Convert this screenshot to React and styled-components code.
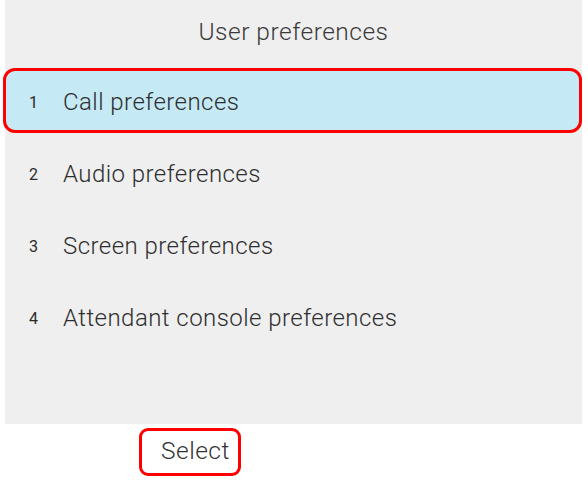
import React from "react";
import styled, { createGlobalStyle } from "styled-components";

const Global = createGlobalStyle`
  body {
    margin: 0;
    background: #ffffff;
    font-family: Roboto, "Liberation Sans", Arial, sans-serif;
  }
`;

const Screen = styled.div`
  width: 588px;
  height: 481px;
  display: flex;
  flex-direction: column;
`;

const Panel = styled.div`
  margin-left: 5px;
  width: 577px;
  height: 424px;
  background: #efefef;
  display: flex;
  flex-direction: column;
`;

const Title = styled.div`
  height: 64px;
  display: flex;
  align-items: center;
  justify-content: center;
  padding-bottom: 1px;
  box-sizing: border-box;
  font-size: 24.5px;
  letter-spacing: 0.5px;
  font-weight: 300;
  color: #3a3a3a;
`;

const Row = styled.div`
  height: 72px;
  display: flex;
  align-items: center;
  margin: 0 0 0 -2px;
`;

const Item = styled.div`
  flex: 1;
  height: 65px;
  box-sizing: border-box;
  display: flex;
  align-items: center;
  padding: 4px 0 0 23px;
  border: 3px solid ${(p) => (p.selected ? "#ff0000" : "transparent")};
  border-radius: 12px;
  background: ${(p) => (p.selected ? "#c5e9f5" : "transparent")};
`;

const Num = styled.span`
  width: 34px;
  font-size: 16px;
  font-weight: 400;
  color: #2a2a2a;
`;

const Label = styled.span`
  font-size: 24px;
  letter-spacing: 0.45px;
  font-weight: 300;
  color: #2e2e2e;
`;

const SoftKeys = styled.div`
  display: flex;
  padding: 4px 0 0 139px;
`;

const SoftKey = styled.div`
  width: 102px;
  height: 48px;
  box-sizing: border-box;
  border: 3px solid #ff0000;
  border-radius: 9px;
  display: flex;
  align-items: center;
  padding-left: 19px;
  padding-bottom: 3px;
  font-size: 24.5px;
  letter-spacing: 0.5px;
  font-weight: 300;
  color: #333;
`;

const items = [
  "Call preferences",
  "Audio preferences",
  "Screen preferences",
  "Attendant console preferences",
];

export default function App() {
  return (
    <Screen>
      <Global />
      <Panel>
        <Title>User preferences</Title>
        {items.map((label, i) => (
          <Row key={label}>
            <Item selected={i === 0}>
              <Num>{i + 1}</Num>
              <Label>{label}</Label>
            </Item>
          </Row>
        ))}
      </Panel>
      <SoftKeys>
        <SoftKey>Select</SoftKey>
      </SoftKeys>
    </Screen>
  );
}
